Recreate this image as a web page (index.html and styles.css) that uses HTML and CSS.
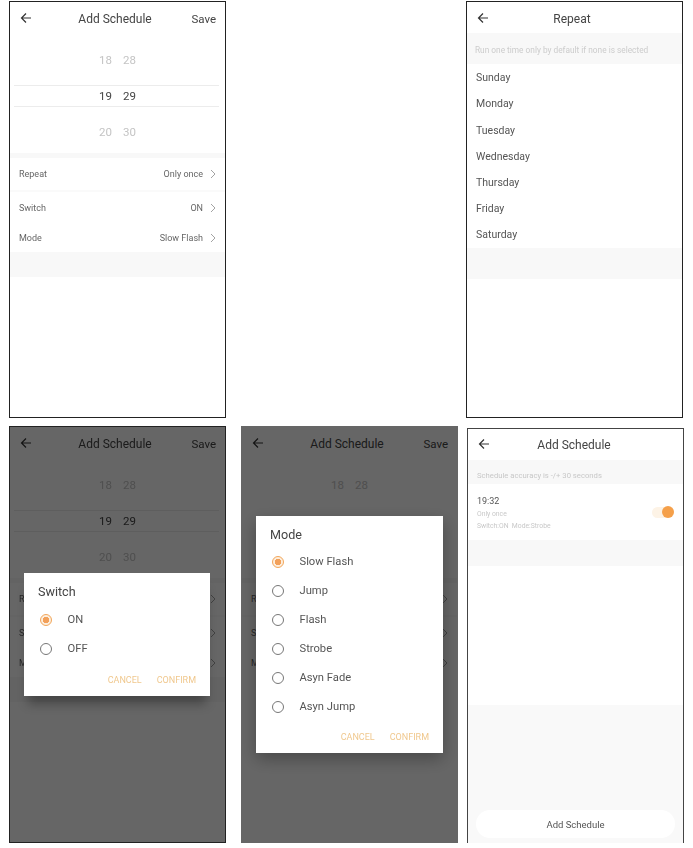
FILE: index.html
```html
<!DOCTYPE html>
<html lang="en">
<head>
  <meta charset="UTF-8">
  <meta name="viewport" content="width=device-width, initial-scale=1.0">
  <title>Add Schedule</title>
  <link rel="stylesheet" href="styles.css">
</head>
<body>
  <svg class="icon-defs" width="0" height="0">
    <symbol id="back" viewBox="0 0 12 12"><path d="M11 6H1.5M6 1.5 1.5 6 6 10.5" fill="none" stroke="currentColor" stroke-width="1.2"/></symbol>
    <symbol id="chevron" viewBox="0 0 6 10"><path d="M1 1l4 4-4 4" fill="none" stroke="currentColor" stroke-width="0.9"/></symbol>
  </svg>

  <main class="sheet">
    <!-- top left: the form -->
    <section class="phone">
      <div class="screen">
        <header class="top-bar">
          <svg class="back"><use href="#back"/></svg>
          <h1>Add Schedule</h1>
          <span class="save">Save</span>
        </header>
        <div class="wheel">
          <div class="wheel-row"><span>18</span><span>28</span></div>
          <div class="wheel-row current"><span>19</span><span>29</span></div>
          <div class="wheel-row"><span>20</span><span>30</span></div>
        </div>
        <div class="settings">
          <div class="setting tall"><span>Repeat</span><span class="value">Only once</span><svg class="chevron"><use href="#chevron"/></svg></div>
          <div class="setting mid"><span>Switch</span><span class="value">ON</span><svg class="chevron"><use href="#chevron"/></svg></div>
          <div class="setting"><span>Mode</span><span class="value">Slow Flash</span><svg class="chevron"><use href="#chevron"/></svg></div>
        </div>
        <div class="band"></div>
      </div>
    </section>

    <div class="empty"></div>

    <!-- top right: repeat days -->
    <section class="phone">
      <div class="screen">
        <header class="top-bar">
          <svg class="back"><use href="#back"/></svg>
          <h1>Repeat</h1>
        </header>
        <p class="hint repeat-hint">Run one time only by default if none is selected</p>
        <ul class="days">
          <li>Sunday</li>
          <li>Monday</li>
          <li>Tuesday</li>
          <li>Wednesday</li>
          <li>Thursday</li>
          <li>Friday</li>
          <li>Saturday</li>
        </ul>
        <div class="band days-band"></div>
      </div>
    </section>

    <!-- bottom left: switch dialog, only the first letter of each row shows beside it -->
    <section class="phone">
      <div class="screen">
        <header class="top-bar">
          <svg class="back"><use href="#back"/></svg>
          <h1>Add Schedule</h1>
          <span class="save">Save</span>
        </header>
        <div class="wheel">
          <div class="wheel-row"><span>18</span><span>28</span></div>
          <div class="wheel-row current"><span>19</span><span>29</span></div>
          <div class="wheel-row"><span>20</span><span>30</span></div>
        </div>
        <div class="settings">
          <div class="setting tall"><span>R</span><svg class="chevron"><use href="#chevron"/></svg></div>
          <div class="setting mid"><span>S</span><svg class="chevron"><use href="#chevron"/></svg></div>
          <div class="setting"><span>M</span><svg class="chevron"><use href="#chevron"/></svg></div>
        </div>
        <div class="band"></div>
        <div class="scrim"></div>
        <div class="dialog switch-dialog">
          <h2>Switch</h2>
          <div class="option"><span class="radio on"></span>ON</div>
          <div class="option"><span class="radio"></span>OFF</div>
          <div class="dialog-actions"><span>CANCEL</span><span>CONFIRM</span></div>
        </div>
      </div>
    </section>

    <!-- bottom middle: mode dialog -->
    <section class="phone no-frame">
      <div class="screen">
        <header class="top-bar">
          <svg class="back"><use href="#back"/></svg>
          <h1>Add Schedule</h1>
          <span class="save">Save</span>
        </header>
        <div class="wheel">
          <div class="wheel-row"><span>18</span><span>28</span></div>
        </div>
        <div class="settings">
          <div class="setting tall"><span>R</span><svg class="chevron"><use href="#chevron"/></svg></div>
          <div class="setting mid"><span>S</span><svg class="chevron"><use href="#chevron"/></svg></div>
          <div class="setting"><span>M</span><svg class="chevron"><use href="#chevron"/></svg></div>
        </div>
        <div class="scrim"></div>
        <div class="dialog mode-dialog">
          <h2>Mode</h2>
          <div class="option"><span class="radio on"></span>Slow Flash</div>
          <div class="option"><span class="radio"></span>Jump</div>
          <div class="option"><span class="radio"></span>Flash</div>
          <div class="option"><span class="radio"></span>Strobe</div>
          <div class="option"><span class="radio"></span>Asyn Fade</div>
          <div class="option"><span class="radio"></span>Asyn Jump</div>
          <div class="dialog-actions"><span>CANCEL</span><span>CONFIRM</span></div>
        </div>
      </div>
    </section>

    <!-- bottom right: schedule list -->
    <section class="phone soft-frame">
      <div class="screen list-screen">
        <header class="top-bar">
          <svg class="back"><use href="#back"/></svg>
          <h1>Add Schedule</h1>
        </header>
        <p class="hint accuracy-hint">Schedule accuracy is -/+ 30 seconds</p>
        <div class="schedule">
          <div class="schedule-text">
            <strong>19:32</strong>
            <small>Only once</small>
            <small>Switch:ON&nbsp; Mode:Strobe</small>
          </div>
          <span class="toggle"><span class="knob"></span></span>
        </div>
        <div class="band list-band"></div>
        <div class="list-fill"></div>
        <div class="list-footer">
          <button type="button" class="add-button">Add Schedule</button>
        </div>
      </div>
    </section>
  </main>
</body>
</html>
```

FILE: styles.css
```css
* {
  box-sizing: border-box;
}

body {
  font-family: Roboto, "Noto Sans", sans-serif;
  margin: 0;
  padding: 0;
  background-color: white;
  color: #555;
}

.icon-defs {
  display: block;
}

.sheet {
  display: grid;
  grid-template-columns: 232px 225px 218px;
  grid-template-rows: 417px 417px;
  row-gap: 8px;
  padding: 1px 0 0 9px;
}

.phone {
  width: 217px;
  border: 1px solid #222;
  overflow: hidden;
}

.phone.no-frame {
  border-color: #666;
}

.phone.soft-frame {
  height: 416px;
  margin: 2px 0 0 1px;
  border: 1.5px solid #444;
}

.screen {
  position: relative;
  height: 100%;
  display: flex;
  flex-direction: column;
  background-color: white;
  filter: blur(0.4px);
}

/* header */
.top-bar {
  position: relative;
  height: 34px;
  padding-right: 5px;
  flex: none;
  display: flex;
  align-items: center;
  justify-content: center;
}

.top-bar h1 {
  margin: 0;
  font-size: 12px;
  font-weight: 400;
  color: #444;
}

.back {
  position: absolute;
  left: 10px;
  top: 10px;
  width: 12px;
  height: 12px;
  color: #333;
}

.save {
  position: absolute;
  right: 9px;
  font-size: 11.5px;
  color: #444;
}

/* time wheel */
.wheel {
  height: 122px;
  flex: none;
  padding-top: 13px;
  display: flex;
  flex-direction: column;
  gap: 14px;
  border-bottom: 5px solid #f8f8f8;
}

.wheel-row {
  height: 22px;
  flex: none;
  display: flex;
  align-items: center;
  justify-content: center;
  gap: 11px;
  font-size: 11.5px;
  color: #c4c4c4;
}

.wheel-row.current {
  margin: 0 6px 0 4px;
  padding-left: 2px;
  color: #444;
  border-top: 1px solid #ececec;
  border-bottom: 1px solid #ececec;
}

/* settings rows */
.setting {
  height: 28px;
  padding: 0 9px;
  display: flex;
  align-items: center;
  justify-content: space-between;
  font-size: 9px;
  color: #666;
}

.setting.tall {
  height: 34px;
  border-bottom: 2px solid #fafafa;
}

.setting.mid {
  height: 32px;
}

.setting .value {
  margin-left: auto;
}

.chevron {
  width: 6px;
  height: 10px;
  margin-left: 7px;
  color: #999;
}

.band {
  height: 25px;
  flex: none;
  background-color: #f8f8f8;
}

/* repeat screen */
.hint {
  margin: 0;
  padding: 0 8px;
  display: flex;
  align-items: center;
  flex: none;
  font-size: 8.3px;
  color: #ccc;
  background-color: #f8f8f8;
}

.repeat-hint {
  height: 31px;
  margin-top: -3px;
  padding-top: 3px;
}

.days {
  list-style: none;
  margin: 0;
  padding: 0.6px 0 0;
}

.days li {
  height: 26.2px;
  padding: 0 9px;
  display: flex;
  align-items: center;
  font-size: 10.5px;
  color: #555;
}

.days-band {
  height: 31px;
}

/* dialogs */
.scrim {
  position: absolute;
  inset: 0;
  background-color: rgba(0, 0, 0, 0.6);
}

.dialog {
  position: absolute;
  background-color: white;
  box-shadow: 0 6px 16px rgba(0, 0, 0, 0.3);
}

.switch-dialog {
  left: 14px;
  top: 146px;
  width: 186px;
  height: 123px;
  padding: 11px 14px 0;
  box-shadow: 0 12px 10px -4px rgba(0, 0, 0, 0.3);
}

.mode-dialog {
  left: 14px;
  top: 89px;
  width: 187px;
  height: 237px;
  padding: 11px 14px 0;
}

.dialog h2 {
  margin: 0 0 4px;
  height: 16px;
  line-height: 16px;
  font-size: 12.6px;
  font-weight: 400;
  color: #444;
}

.option {
  height: 29px;
  padding-left: 1.5px;
  display: flex;
  align-items: center;
  font-size: 11.2px;
  color: #555;
}

.switch-dialog .option {
  position: relative;
  top: 1px;
}

.radio {
  width: 12px;
  height: 12px;
  margin-right: 16px;
  border: 1px solid #777;
  border-radius: 50%;
  flex: none;
}

.radio.on {
  border-color: #f2a65a;
  background: radial-gradient(circle, #f2a05a 0 3px, #fdeedd 3.5px);
}

.dialog-actions {
  margin-top: 10px;
  display: flex;
  justify-content: flex-end;
  gap: 15px;
  font-size: 9px;
  line-height: 16px;
  color: #f0c88e;
}

.mode-dialog .dialog-actions {
  margin-top: 8px;
}

/* schedule list */
.list-screen .top-bar {
  height: 31px;
  padding-right: 3px;
}

.list-screen .back {
  top: 9px;
}

.accuracy-hint {
  height: 24px;
  padding-top: 7px;
  padding-left: 9px;
  font-size: 7.7px;
  color: #c8c8c8;
}

.schedule {
  height: 56px;
  padding: 0 9.5px 0 9px;
  display: flex;
  align-items: center;
  justify-content: space-between;
  flex: none;
}

.schedule-text {
  display: flex;
  flex-direction: column;
  padding-top: 2px;
}

.schedule-text strong {
  font-size: 9px;
  font-weight: 400;
  line-height: 13px;
  color: #555;
}

.schedule-text small {
  font-size: 6.8px;
  line-height: 12px;
  color: #c8c8c8;
}

.toggle {
  position: relative;
  width: 22px;
  height: 11px;
  border-radius: 6px;
  background-color: #fdf3e6;
}

.knob {
  position: absolute;
  right: 0;
  top: -0.5px;
  width: 12px;
  height: 12px;
  border-radius: 50%;
  background-color: #f5a04a;
}

.list-band {
  height: 26px;
}

.list-fill {
  height: 139px;
  flex: none;
}

.list-footer {
  flex: 1;
  padding: 105px 8px 0 8px;
  background-color: #f9f9f9;
}

.add-button {
  display: block;
  width: 100%;
  height: 28px;
  border: 0;
  border-radius: 14px;
  background-color: white;
  font-family: inherit;
  font-size: 9.5px;
  color: #555;
}
```
